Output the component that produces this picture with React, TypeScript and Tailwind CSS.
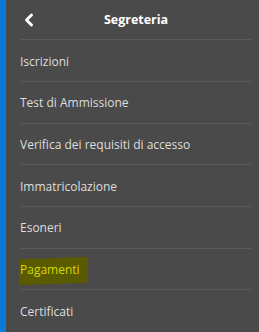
import { ChevronLeft } from "lucide-react";

const items = [
  "Iscrizioni",
  "Test di Ammissione",
  "Verifica dei requisiti di accesso",
  "Immatricolazione",
  "Esoneri",
  "Pagamenti",
  "Certificati",
];

export default function App() {
  return (
    <div
      className="flex h-[332px] w-[259px] overflow-hidden bg-[#4a4a4a]"
      style={{ fontFamily: '"Open Sans", "Noto Sans", sans-serif' }}
    >
      <div className="w-[6px] shrink-0 bg-[#0a7ad4]" />
      <div className="flex flex-1 flex-col pl-[14px] pr-[7px]">
        {/* Header */}
        <div className="relative flex h-[41px] items-center justify-center border-b border-[#5a5a5a] pt-[1px]">
          <ChevronLeft
            className="absolute left-[-1px] top-[10px] h-[20px] w-[20px] text-white"
            strokeWidth={3.5}
          />
          <span className="text-[12.5px] font-bold text-white">Segreteria</span>
        </div>

        {/* Menu */}
        {items.map((label) => (
          <div
            key={label}
            className="flex h-[41.7px] shrink-0 items-center border-b border-[#5a5a5a] pt-[2px] last:border-b-0"
          >
            {label === "Pagamenti" ? (
              <span className="relative text-[12px] text-[#d4d800]">
                <span className="absolute left-[-1px] right-[-8px] top-[-3px] bottom-[-5px] -skew-y-2 bg-[#5a5a00]" />
                <span className="relative">{label}</span>
              </span>
            ) : (
              <span className="text-[12px] text-[#dedede]">{label}</span>
            )}
          </div>
        ))}
      </div>
    </div>
  );
}
